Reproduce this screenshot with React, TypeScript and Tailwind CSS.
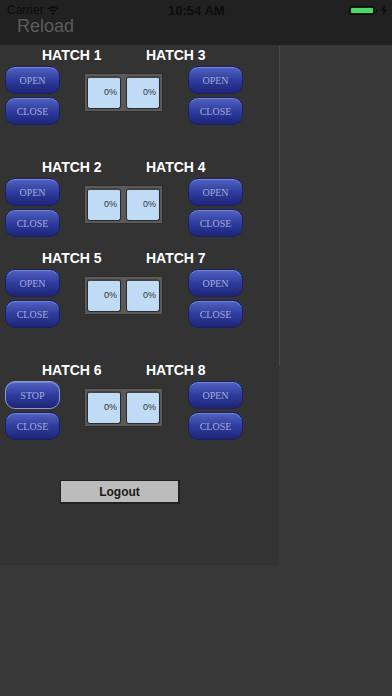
import React from 'react';

const font = { fontFamily: '"Liberation Sans", Arial, sans-serif' };
const serif = { fontFamily: '"Liberation Serif", "Times New Roman", serif' };

function HatchButton({ label, stop }: { label: string; stop?: boolean }) {
  return (
    <div
      className={
        'h-[28px] w-[55px] rounded-[10px] flex items-center justify-center text-[10px] text-[#a3acd6] bg-gradient-to-b from-[#5263c2] via-[#2f3c9e] to-[#1c2578] shadow-[inset_0_1px_0_rgba(255,255,255,0.22)] ' +
        (stop ? 'border-[1.5px] border-[#8d9bd4]' : 'border border-[#1a2060]')
      }
      style={serif}
    >
      {label}
    </div>
  );
}

function Gauge() {
  return (
    <div className="w-[34px] h-[33px] rounded-[3px] bg-[#c0dbf6] border border-[#2a2a2a] border-t-2 border-t-[#4a4236] flex items-center justify-end pr-[3px]">
      <span className="text-[9px] text-[#333]" style={font}>0%</span>
    </div>
  );
}

function Section({ a, b, leftTop = 'OPEN', className }: { a: string; b: string; leftTop?: string; className?: string }) {
  return (
    <div className={className}>
      <div className="flex h-[16px] items-center text-[14px] font-bold text-white leading-none" style={font}>
        <span className="ml-[42px] w-[104px]">{a}</span>
        <span>{b}</span>
      </div>
      <div className="flex mt-[3px] pl-[5px]">
        <div className="flex flex-col gap-[3px]">
          <HatchButton label={leftTop} stop={leftTop === 'STOP'} />
          <HatchButton label="CLOSE" />
        </div>
        <div className="ml-[24px] mt-[7px] w-[79px] h-[39px] bg-[#5a5a5a] border border-[#2e2e2e] flex items-center justify-center gap-[5px]">
          <Gauge />
          <Gauge />
        </div>
        <div className="ml-[25px] flex flex-col gap-[3px]">
          <HatchButton label="OPEN" />
          <HatchButton label="CLOSE" />
        </div>
      </div>
    </div>
  );
}

export default function App() {
  return (
    <div className="w-[392px] h-[696px] bg-[#383838] overflow-hidden" style={font}>
      <div className="h-[45px] bg-[#212121]">
        <div className="h-[18px] pt-[2px] flex items-center pl-[7px] pr-[4px] text-[12px] leading-none text-[#0c0c0c]">
          <span className="flex items-center gap-[3px] w-[120px]">
            Carrier
            <svg width="12" height="9" viewBox="0 0 12 9">
              <path d="M1 3.2 A7 7 0 0 1 11 3.2" stroke="#0c0c0c" strokeWidth="1.6" fill="none" />
              <path d="M3 5.2 A4.2 4.2 0 0 1 9 5.2" stroke="#0c0c0c" strokeWidth="1.6" fill="none" />
              <circle cx="6" cy="7.6" r="1.2" fill="#0c0c0c" />
            </svg>
          </span>
          <span className="ml-[41px] font-semibold text-[13px]">10:54 AM</span>
          <span className="ml-auto flex items-center gap-[1px]">
            <span className="w-[26px] h-[9px] rounded-[2px] border border-[#0c0c0c] p-[1px] flex">
              <span className="flex-1 bg-[#4cd964] rounded-[1px]" />
            </span>
            <span className="w-[1px] h-[3px] bg-[#0c0c0c]" />
            <svg width="8" height="10" viewBox="0 0 8 10" className="ml-[2px]">
              <path d="M5 0 L1 5.5 H3.6 L2.8 10 L7 4.2 H4.4 Z" fill="#0c0c0c" />
            </svg>
          </span>
        </div>
        <div className="pl-[17px] text-[18px] text-[#5c5c5c] leading-[16px] mt-[0px]">Reload</div>
      </div>
      <div className="flex">
        <div className="w-[279px] h-[520px] bg-[#333333] relative pt-[2px]">
          <div className="absolute right-[-1px] top-[1px] w-[1px] h-[320px] bg-[#4a4744]" />
          <Section a="HATCH 1" b="HATCH 3" />
          <Section a="HATCH 2" b="HATCH 4" className="mt-[34px]" />
          <Section a="HATCH 5" b="HATCH 7" className="mt-[13px]" />
          <Section a="HATCH 6" b="HATCH 8" leftTop="STOP" className="mt-[34px]" />
          <div className="ml-[60px] mt-[40px] w-[120px] h-[24px] bg-[#bcbcbc] border border-[#222] border-b-2 border-r-2 flex items-center justify-center text-[12px] font-bold text-[#1a1a1a]">
            Logout
          </div>
        </div>
      </div>
    </div>
  );
}
